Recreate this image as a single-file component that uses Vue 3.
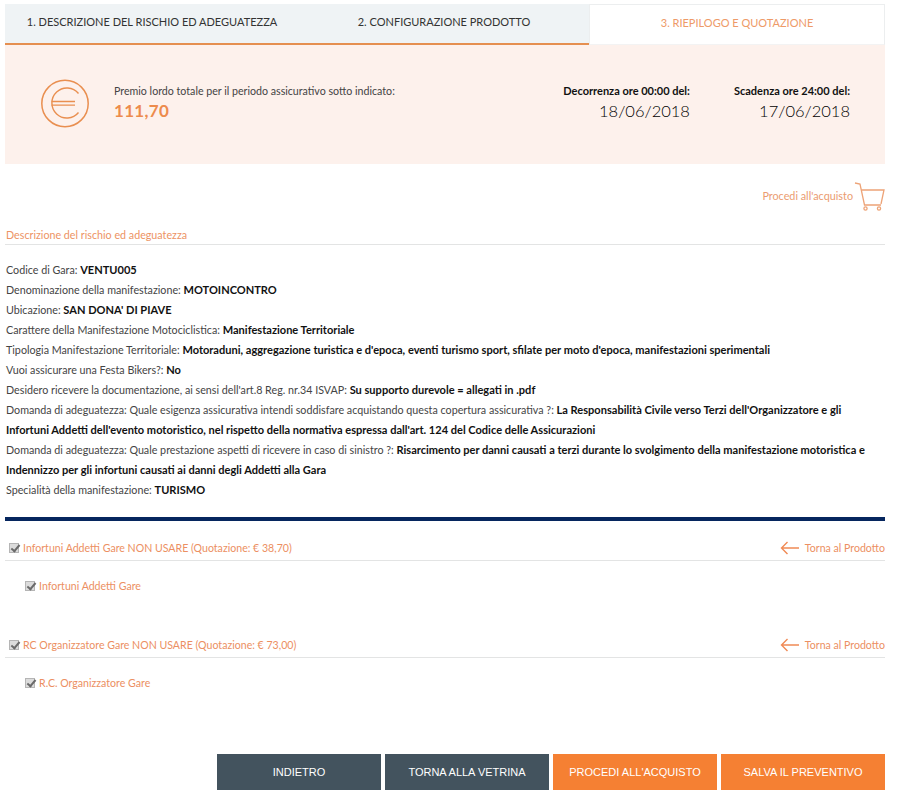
<template>
  <div class="page">
    <div class="tabs">
      <div class="tab tab-first">1. DESCRIZIONE DEL RISCHIO ED ADEGUATEZZA</div>
      <div class="tab tab-second">2. CONFIGURAZIONE PRODOTTO</div>
      <div class="tab tab-active">3. RIEPILOGO E QUOTAZIONE</div>
    </div>

    <div class="banner">
      <svg class="euro" width="50" height="50" viewBox="0 0 50 50" fill="none" stroke="#e98f50">
        <circle cx="25" cy="24.5" r="23.2" stroke-width="1.5" />
        <path d="M38.5 14.5 A15 15 0 1 0 38.5 33.5" stroke-width="1.4" />
        <path d="M11.5 22.5 H35 M11.5 26.2 H35" stroke-width="1.3" />
      </svg>
      <div class="premio">
        <div class="premio-label">Premio lordo totale per il periodo assicurativo sotto indicato:</div>
        <div class="premio-value">111,70</div>
      </div>
      <div class="date date-start">
        <strong>Decorrenza ore 00:00 del:</strong>
        <span>18/06/2018</span>
      </div>
      <div class="date date-end">
        <strong>Scadenza ore 24:00 del:</strong>
        <span>17/06/2018</span>
      </div>
    </div>

    <div class="buy-row">
      <span>Procedi all'acquisto</span>
      <svg width="32" height="30" viewBox="0 0 32 30" fill="none" stroke="#eda377" stroke-width="1.3">
        <path d="M2 1 L7 2 L11.5 23 H28" />
        <path d="M8.3 8 H31 L28 22" />
        <circle cx="12.5" cy="26.5" r="1.6" />
        <circle cx="26" cy="26.5" r="1.6" />
      </svg>
    </div>

    <div class="section-title">Descrizione del rischio ed adeguatezza</div>

    <div class="details">
      <p v-for="row in rows" :key="row.label">{{ row.label }}: <b>{{ row.value }}</b></p>
    </div>

    <div class="navy-rule"></div>

    <div v-for="p in products" :key="p.name" class="product">
      <div class="product-head">
        <label class="check-label">
          <input type="checkbox" checked disabled />
          <span>{{ p.name }} (Quotazione: € {{ p.price }})</span>
        </label>
        <span class="back-link">
          <svg width="20" height="14" viewBox="0 0 20 14" fill="none" stroke="#f08a55" stroke-width="1.4">
            <path d="M7.5 1 L1.5 7 L7.5 13 M1.5 7 H19" />
          </svg>
          Torna al Prodotto
        </span>
      </div>
      <label class="check-label sub">
        <input type="checkbox" checked disabled />
        <span>{{ p.sub }}</span>
      </label>
    </div>

    <div class="actions">
      <button class="btn btn-dark">INDIETRO</button>
      <button class="btn btn-dark">TORNA ALLA VETRINA</button>
      <button class="btn btn-orange">PROCEDI ALL'ACQUISTO</button>
      <button class="btn btn-orange">SALVA IL PREVENTIVO</button>
    </div>
  </div>
</template>

<script setup>
const rows = [
  { label: 'Codice di Gara', value: 'VENTU005' },
  { label: 'Denominazione della manifestazione', value: 'MOTOINCONTRO' },
  { label: 'Ubicazione', value: "SAN DONA' DI PIAVE" },
  { label: 'Carattere della Manifestazione Motociclistica', value: 'Manifestazione Territoriale' },
  { label: 'Tipologia Manifestazione Territoriale', value: "Motoraduni, aggregazione turistica e d'epoca, eventi turismo sport, sfilate per moto d'epoca, manifestazioni sperimentali" },
  { label: 'Vuoi assicurare una Festa Bikers?', value: 'No' },
  { label: "Desidero ricevere la documentazione, ai sensi dell'art.8 Reg. nr.34 ISVAP", value: 'Su supporto durevole = allegati in .pdf' },
  { label: 'Domanda di adeguatezza: Quale esigenza assicurativa intendi soddisfare acquistando questa copertura assicurativa ?', value: "La Responsabilità Civile verso Terzi dell'Organizzatore e gli Infortuni Addetti dell'evento motoristico, nel rispetto della normativa espressa dall'art. 124 del Codice delle Assicurazioni" },
  { label: 'Domanda di adeguatezza: Quale prestazione aspetti di ricevere in caso di sinistro ?', value: 'Risarcimento per danni causati a terzi durante lo svolgimento della manifestazione motoristica e Indennizzo per gli infortuni causati ai danni degli Addetti alla Gara' },
  { label: 'Specialità della manifestazione', value: 'TURISMO' }
]

const products = [
  { name: 'Infortuni Addetti Gare NON USARE', price: '38,70', sub: 'Infortuni Addetti Gare' },
  { name: 'RC Organizzatore Gare NON USARE', price: '73,00', sub: 'R.C. Organizzatore Gare' }
]
</script>

<style>
html, body { background: #fff; }
</style>

<style scoped>
.page { width: 880px; margin-left: 5px; padding-top: 4px; font-family: Lato, "Open Sans", sans-serif; font-size: 10.72px; color: #333; }

.tabs { display: flex; height: 41px; }
.tab { display: flex; align-items: center; justify-content: center; padding-bottom: 4px; box-sizing: border-box; background: #eff3f5; border-bottom: 2px solid #e58f50; color: #333; font-size: 11px; }
.tab-first { width: 292px; padding-left: 2px; }
.tab-second { width: 292px; padding-left: 2px; }
.tab-active { flex: 1; background: #fff; border: 1px solid #eceeef; border-bottom: 1px solid #f3f3f3; color: #ee9a68; }

.banner { display: flex; height: 119px; background: #fdf1ec; align-items: flex-start; padding: 34px 35px 0 35px; box-sizing: border-box; }
.euro { flex: none; margin-right: 24px; }
.premio { flex: 1; padding-top: 4px; font-size: 10.65px; }
.premio-label { color: #444; line-height: 15px; }
.premio-value { color: #ed8b4c; font-size: 17px; font-weight: 700; line-height: 26px; letter-spacing: 0.3px; }
.date { display: flex; flex-direction: column; align-items: flex-end; padding-top: 4px; }
.date strong { font-size: 11px; line-height: 15px; color: #111; }
.date span { font-size: 16.5px; font-weight: 300; line-height: 26px; color: #000; }
.date-start { margin-right: 44px; }

.buy-row { display: flex; justify-content: flex-end; align-items: center; height: 30px; margin-top: 18px; color: #eb9c70; font-size: 10.8px; }
.buy-row span { margin-top: -3px; }

.section-title { margin-top: 15px; padding: 0 0 1px 1px; border-bottom: 1px solid #e3e4e4; line-height: 16px; color: #ed9364; }

.details { margin-top: 15px; padding: 0 12px 0 1px; }
.details p { margin: 0; line-height: 20px; color: #444; }
.details b { color: #111; font-size: 11.05px; }

.navy-rule { height: 4px; background: #06265e; margin-top: 17px; }

.product { height: 97px; padding-top: 17px; box-sizing: border-box; }
.product-head { display: flex; justify-content: space-between; align-items: center; height: 19px; padding-bottom: 3px; border-bottom: 1px solid #e3e4e4; box-sizing: content-box; }
.check-label { display: flex; align-items: center; color: #ec8f62; font-size: 10.6px; }
.check-label input { appearance: none; position: relative; width: 10px; height: 10px; margin: 0 4px 0 4px; background: #dcdcdc; border: 1px solid #b5b5b5; box-sizing: border-box; }
.check-label input::after { content: ""; position: absolute; left: 2.5px; top: -1px; width: 3px; height: 7px; border: solid #6a6a6a; border-width: 0 2px 2px 0; transform: rotate(40deg); }
.sub { margin: 19px 0 0 16px; }
.back-link { display: flex; align-items: center; gap: 5px; color: #ec8f62; font-size: 10.6px; }

.actions { display: flex; justify-content: flex-end; gap: 4px; margin-top: 39px; }
.btn { width: 164px; height: 36px; border: none; color: #fff; font-family: "Liberation Sans", Arial, sans-serif; font-size: 11px; }
.btn-dark { background: #43535e; }
.btn-orange { background: #f58033; }
</style>
